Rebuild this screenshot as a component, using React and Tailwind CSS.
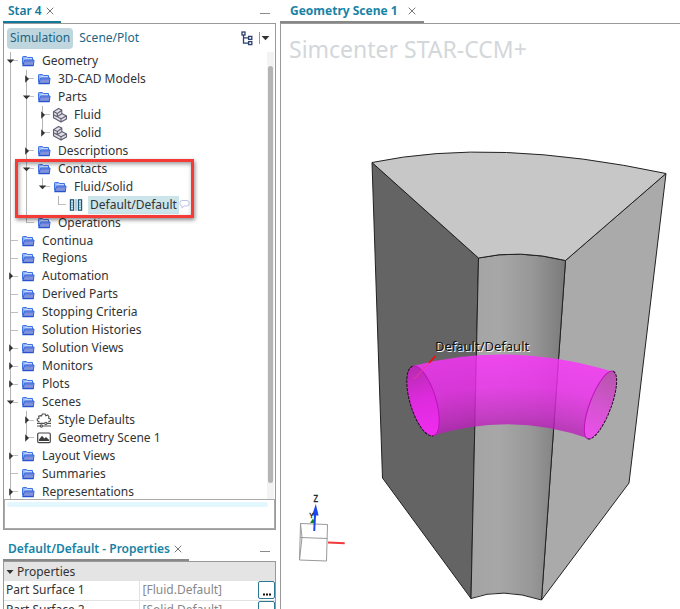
import React from "react";

const TREE = [
  { label: "Geometry", state: "open" },
  { label: "3D-CAD Models", state: "closed", rails: [1] },
  { label: "Parts", state: "open", rails: [1] },
  { label: "Fluid", state: "closed", icon: "part", rails: [1, 1] },
  { label: "Solid", state: "closed", icon: "part", last: true, rails: [1, 1] },
  { label: "Descriptions", state: "closed", rails: [1] },
  { label: "Contacts", state: "open", rails: [1] },
  { label: "Fluid/Solid", state: "open", last: true, rails: [1, 1] },
  { label: "Default/Default", icon: "contact", last: true, selected: true, rails: [1, 1, 0] },
  { label: "Operations", last: true, rails: [1] },
  { label: "Continua" },
  { label: "Regions" },
  { label: "Automation", state: "closed" },
  { label: "Derived Parts" },
  { label: "Stopping Criteria" },
  { label: "Solution Histories" },
  { label: "Solution Views", state: "closed" },
  { label: "Monitors", state: "closed" },
  { label: "Plots", state: "closed" },
  { label: "Scenes", state: "open" },
  { label: "Style Defaults", state: "closed", icon: "style", rails: [1] },
  { label: "Geometry Scene 1", state: "closed", icon: "scene", last: true, rails: [1] },
  { label: "Layout Views", state: "closed" },
  { label: "Summaries" },
  { label: "Representations", state: "closed" },
];

function FolderIcon() {
  return (
    <svg width="16" height="12" viewBox="0 0 16 12" aria-hidden="true">
      <path d="M2.5 9.5V2.2Q2.5 1.5 3.2 1.5H6.5L7.5 2.5H12.5V5" fill="#8fb2f6" stroke="#3f74e6" />
      <path d="M4.6 3.9H12" stroke="#e6effe" />
      <path d="M3 10.4 4.4 5.6Q4.6 5 5.2 5H14L13.4 10.4Z" fill="#8493dc" stroke="#2f5fd6" />
      <path d="M5 6.6H13.2" stroke="#5f80e0" />
      <path d="M2.4 10.6H13.6" stroke="#2754cc" strokeWidth="1.3" />
    </svg>
  );
}

function PartIcon() {
  return (
    <svg width="16" height="16" viewBox="0 0 16 16" fill="#e0dee8" stroke="#5f5c6e" strokeWidth="1.1" strokeLinejoin="round" aria-hidden="true">
      <path d="M1.5 4.6 6.5 1.5 9.8 3V6.6L14.5 9V12L9 15 1.5 10.8Z" />
      <path d="M1.5 4.6 5.3 6.6 9.8 3.2M5.3 6.6V9.6L9 11.8V15M9 11.8 14.5 9M5.3 9.6 9.8 6.8M1.5 7.8 5.3 9.8" fill="none" />
    </svg>
  );
}

function ContactIcon() {
  return (
    <svg width="16" height="14" viewBox="0 0 16 14" fill="#cfe6f1" stroke="#1f5672" aria-hidden="true">
      <rect x="2.4" y="1.8" width="3.2" height="10.4" strokeWidth="1.2" />
      <rect x="10.4" y="1.8" width="3.2" height="10.4" strokeWidth="1.2" />
      <path d="M8 1V13" stroke="#5d9fc2" />
      <path d="M4 4V10M12 4V10" stroke="#4f88a4" strokeDasharray="1.5 1" />
    </svg>
  );
}

function StyleIcon() {
  return (
    <svg width="16" height="16" viewBox="0 0 16 16" fill="none" stroke="#505050" strokeWidth="1.1" aria-hidden="true">
      <path d="M3.4 10 1.4 8.6 1.2 7 3 6.2 2.6 4.2 4.8 3.6 5.6 3.8 6.4 2 9.2 2 9.8 3.8 11.6 2.9 13 4.6 12.6 6.2 14.6 7 14.4 8.8 12.4 9.8" />
      <path d="M1 11.4H8.6M11 11.4H15M1 14H4M7 14H15" />
      <circle cx="9.8" cy="11.4" r="1.1" />
      <circle cx="5.4" cy="14" r="1.1" />
    </svg>
  );
}

function SceneIcon() {
  return (
    <svg width="16" height="14" viewBox="0 0 16 14" aria-hidden="true">
      <rect x="1.7" y="2" width="12.6" height="9.6" rx="1.2" fill="#fff" stroke="#444" strokeWidth="1.2" />
      <path d="M3 10V8.5L6 4.7 8.4 7.6 10 5.9 13 8.8V10Z" fill="#3d3d3d" />
    </svg>
  );
}

const ICONS = { part: PartIcon, contact: ContactIcon, style: StyleIcon, scene: SceneIcon };

function Expander({ state }) {
  return (
    <svg
      className="absolute -left-0.5 top-1/2 -translate-y-1/2"
      width="16"
      height="10"
      viewBox="0 0 16 10"
      fill="#333"
      aria-hidden="true"
    >
      {state === "open" ? <path d="M4.8 3.4H12.2L8.5 7.2Z" /> : <path d="M7.2 1.2 11 5 7.2 8.8Z" />}
    </svg>
  );
}

function TreeRow({ label, state, icon, last, selected, rails = [] }) {
  const Icon = ICONS[icon] || FolderIcon;
  return (
    <li className="flex min-h-0 flex-1 items-center">
      {rails.map((on, i) => (
        <span key={i} className="flex h-full w-4 pl-1.5">
          {on ? <span className="h-full w-px bg-[#b4b4b4]" /> : null}
        </span>
      ))}
      <span className="relative flex h-full w-4 pl-1.5">
        <span className={last ? "h-1/2 w-px bg-[#b4b4b4]" : "h-full w-px bg-[#b4b4b4]"} />
        <span className="mr-0.5 h-px flex-1 self-center bg-[#c0c0c0]" />
        {state ? <Expander state={state} /> : null}
      </span>
      <span className="flex w-4 justify-center">
        <Icon />
      </span>
      <span className={selected ? "ml-1 h-full bg-[#cbe5ea] px-0.5 leading-[18px]" : "ml-1.5 leading-[18px]"}>
        {label}
      </span>
      {selected ? (
        <svg width="11" height="11" viewBox="0 0 11 11" fill="none" stroke="#c3c3e6" aria-hidden="true">
          <path d="M3 1.5H8Q10 1.5 10 3.5V5Q10 7 8 7H5L3 9.2V7Q1 7 1 5V3.5Q1 1.5 3 1.5Z" />
        </svg>
      ) : null}
    </li>
  );
}

function Close({ label }) {
  return (
    <button type="button" aria-label={label} className="flex h-4 w-4 items-center justify-center">
      <svg width="8" height="8" viewBox="0 0 8 8" stroke="#777" aria-hidden="true">
        <path d="M.7 .7 7.3 7.3M7.3 .7 .7 7.3" />
      </svg>
    </button>
  );
}

function Minimize() {
  return (
    <button type="button" aria-label="Minimize" className="ml-auto mr-1.5 flex h-4 w-2.5 items-end pb-0.5">
      <span className="h-px w-full bg-[#8a8a8a]" />
    </button>
  );
}

function PropertyRow({ id, name, value }) {
  return (
    <tr className="h-[19px] border-b border-[#e2e2e2]">
      <th scope="row" className="w-[135px] border-r border-[#e2e2e2] p-0 pl-0.5 text-left font-normal">
        <label htmlFor={id}>{name}</label>
      </th>
      <td className="p-0">
        <div className="flex h-[18px] items-center">
          <input id={id} readOnly defaultValue={value} className="w-0 flex-1 bg-transparent pl-[3px] text-[#888] outline-none" />
          <button
            type="button"
            aria-label={"Edit " + name}
            className="flex h-[18px] w-[17px] items-end justify-center rounded-[2px] border border-[#2c7895] bg-white pb-0.5"
          >
            <svg width="8" height="3" viewBox="0 0 8 3" fill="#111" aria-hidden="true">
              <path d="M0 .5H2V2.5H0ZM3 .5H5V2.5H3ZM6 .5H8V2.5H6Z" />
            </svg>
          </button>
        </div>
      </td>
    </tr>
  );
}

function Model() {
  return (
    <svg
      className="absolute inset-0 h-full w-full"
      viewBox="281 24 399 585"
      preserveAspectRatio="xMinYMin meet"
      role="img"
      aria-label="Geometry scene"
    >
      <defs>
        <linearGradient id="bore" x1="0" y1="0" x2="1" y2="0">
          <stop offset="0" stopColor="#a4a4a4" />
          <stop offset="0.3" stopColor="#a7a7a7" />
          <stop offset="0.65" stopColor="#979797" />
          <stop offset="1" stopColor="#7a7a7a" />
        </linearGradient>
        <radialGradient id="tube" cx="510" cy="685" r="333" gradientUnits="userSpaceOnUse">
          <stop offset="0.76" stopColor="#b01cb0" />
          <stop offset="0.82" stopColor="#d026d0" />
          <stop offset="0.9" stopColor="#f42cf4" />
          <stop offset="1" stopColor="#ff30ff" />
        </radialGradient>
        <linearGradient id="leftCap" x1="0" y1="0" x2="0" y2="1">
          <stop offset="0" stopColor="#b52bb0" />
          <stop offset="0.45" stopColor="#dc2bdc" />
          <stop offset="1" stopColor="#f02cf0" />
        </linearGradient>
        <linearGradient id="rightCap" x1="0" y1="0" x2="0" y2="1">
          <stop offset="0" stopColor="#b455aa" />
          <stop offset="0.5" stopColor="#d354cf" />
          <stop offset="1" stopColor="#ee4fee" />
        </linearGradient>
      </defs>

      <g stroke="#222" strokeLinejoin="round">
        <path d="M372 162.5 478.5 258 471 598.5 382.5 478Z" fill="#646464" />
        <path d="M666 173.5 565.5 260.5 541.5 600 629 483Z" fill="#aaaaaa" />
        <path d="M478.5 258Q519 249 565.5 260.5L541.5 600Q502 587 471 598.5Z" fill="url(#bore)" />
        <path d="M372 162.5Q494 137 666 173.5L565.5 260.5Q519 249 478.5 258Z" fill="#c7c7c7" />
      </g>

      <path
        d="M413 366Q508 340.5 612 371.5L590 439Q512 411 432 436Z"
        fill="url(#tube)"
        fillOpacity="0.8"
      />
      <g transform="translate(423 401) rotate(-16.6)">
        <ellipse rx="13" ry="36.3" fill="url(#leftCap)" />
        <path d="M0 -36.3A13 36.3 0 0 1 0 36.3" fill="none" stroke="#c010c0" />
        <path d="M0 -36.3A13 36.3 0 0 0 0 36.3" fill="none" stroke="#2a0a2a" strokeDasharray="3 1" />
      </g>
      <g transform="translate(600.5 405) rotate(20.6)">
        <ellipse rx="10.7" ry="36.1" fill="url(#rightCap)" />
        <path d="M0 -36.1A10.7 36.1 0 0 0 0 36.1" fill="none" stroke="#c010c0" />
        <path d="M0 -36.1A10.7 36.1 0 0 1 0 36.1" fill="none" stroke="#2a0a2a" strokeDasharray="3 1" />
      </g>
      <path d="M414 379 429 363" stroke="#f53a8e" />
      <path d="M429 363 435.5 356" stroke="#f80808" strokeWidth="1.8" />
      <text x="436" y="352" fontSize="13" fill="#f4f4f4" className="font-['Noto_Sans',sans-serif]" aria-hidden="true">Default/Default</text>
      <text x="435" y="351" fontSize="13" fill="#111" className="font-['Noto_Sans',sans-serif]">Default/Default</text>

      <g fill="none" stroke="#999">
        <path d="M300.5 523.5 327.5 524.5 326.5 561 299.5 560ZM300 537.5 327.5 538.5M300.5 523.5 302 537.5 299.5 560" />
      </g>
      <path d="M328 542.6 344.7 543.2" stroke="#f23a3a" strokeWidth="2" />
      <path d="M310 523 313 518.5 315 523Z" fill="#138a13" />
      <path d="M314.2 531 315.2 512" stroke="#1947f0" strokeWidth="2" />
      <path d="M312 515.5 315.8 504 318.6 515.5Z" fill="#1947f0" />
      <text x="313.5" y="502" fontSize="8" fill="#222" stroke="#222" strokeWidth="0.3" className="font-['Noto_Sans',sans-serif]">Z</text>
      <text x="309.5" y="518" fontSize="7" fill="#222" stroke="#222" strokeWidth="0.3" className="font-['Noto_Sans',sans-serif]">Y</text>
    </svg>
  );
}

export default function App() {
  return (
    <div className="flex h-screen overflow-hidden bg-white font-['Noto_Sans',sans-serif] text-[12px] leading-[18px] text-[#333]">
      <aside className="flex w-[280px] shrink-0 flex-col pl-[3px] pr-1">
        <header className="flex h-[23px] shrink-0 items-stretch">
          <div className="flex items-center border-b-2 border-[#11799b] pl-[5px] pr-[3px]">
            <h2 className="font-semibold text-[#11799b]">Star 4</h2>
            <Close label="Close Star 4" />
          </div>
          <Minimize />
        </header>

        <section className="relative flex shrink-0 flex-col border border-[#999]">
          <nav className="flex h-[28px] items-center pl-[3px] pr-[5px] text-[#1c6585]">
            <button type="button" className="h-[21px] rounded-sm bg-[#bfd6df] px-[3px]">Simulation</button>
            <button type="button" className="ml-1.5">Scene/Plot</button>
            <button type="button" aria-label="Tree view" className="ml-auto">
              <svg width="12" height="15" viewBox="0 0 12 15" fill="none" stroke="#2a3f6b" strokeWidth="1.3" aria-hidden="true">
                <rect x="1" y="1" width="3" height="3" />
                <rect x="7.6" y="5.4" width="3.2" height="3" />
                <rect x="7.6" y="10.6" width="3.2" height="3" />
                <path d="M2.5 4V12.1H7.6M2.5 6.9H7.6" />
              </svg>
            </button>
            <button type="button" aria-label="View options" className="ml-1.5">
              <svg width="11" height="12" viewBox="0 0 11 12" aria-hidden="true">
                <path d="M.5 0V12" stroke="#999" />
                <path d="M2.6 4H10.4L6.5 8.2Z" fill="#333" />
              </svg>
            </button>
          </nav>

          <div className="flex h-[447px] overflow-hidden">
            <ul className="flex h-[449px] flex-1 flex-col">
              {TREE.map((node) => (
                <TreeRow key={node.label} {...node} />
              ))}
            </ul>
            <div className="mr-px w-[7px] bg-[#f3f3f3] pt-[14px]">
              <div className="mx-auto h-[417px] w-[5px] rounded-full bg-[#b4b4b4]" />
            </div>
          </div>

          <div className="h-[30px] border border-[#aaa] px-0.5 pt-0.5">
            <div className="mr-1 h-[5px] rounded-sm bg-[#e2f8fe]" />
          </div>
          <div className="pointer-events-none absolute left-[11px] top-[135px] h-[59px] w-[179px] border-[3px] border-[#f53b38] shadow-[1px_2px_4px_rgba(0,0,0,0.45),inset_1px_2px_4px_rgba(0,0,0,0.4)]" />
        </section>

        <header className="mt-2 flex h-[23px] shrink-0 items-stretch">
          <div className="flex items-center border-b-2 border-[#888] pl-[5px] pr-[3px]">
            <h2 className="font-semibold text-[#1783a6]">Default/Default - Properties</h2>
            <Close label="Close properties" />
          </div>
          <Minimize />
        </header>
        <section className="shrink-0 border border-[#999]">
          <h3 className="flex h-[19px] items-center gap-[3px] bg-[#e4e4e4] pl-0.5">
            <svg width="8" height="8" viewBox="0 0 8 8" fill="#333" aria-hidden="true">
              <path d="M.5 2H7.5L4 6Z" />
            </svg>
            Properties
          </h3>
          <table className="w-full table-fixed border-collapse">
            <tbody>
              <PropertyRow id="surface-1" name="Part Surface 1" value="[Fluid.Default]" />
              <PropertyRow id="surface-2" name="Part Surface 2" value="[Solid.Default]" />
            </tbody>
          </table>
        </section>
      </aside>

      <main className="flex min-w-0 flex-1 flex-col">
        <header className="flex h-[23px] shrink-0 items-stretch">
          <div className="flex items-center gap-1.5 border-b-2 border-[#888] pl-2.5 pr-1">
            <h2 className="font-bold text-[#1783a6]">Geometry Scene 1</h2>
            <Close label="Close Geometry Scene 1" />
          </div>
        </header>
        <section className="relative flex-1 border-l border-t border-[#999]">
          <Model />
          <p className="relative pl-2 pt-2.5 text-[23px] leading-[30px] text-[#d3d7da]">Simcenter STAR-CCM+</p>
        </section>
      </main>
    </div>
  );
}
